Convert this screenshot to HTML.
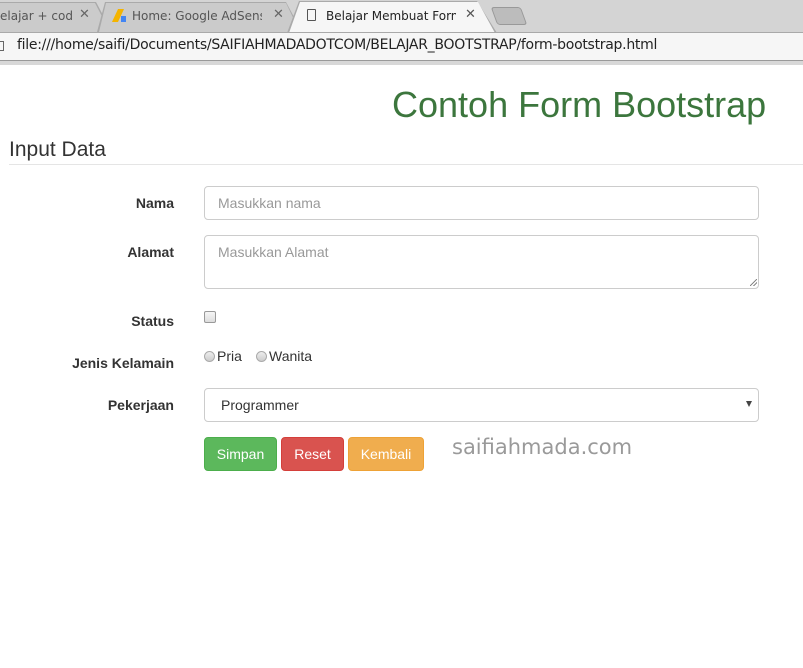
<!DOCTYPE html>
<html><head><meta charset="utf-8"><style>
*{box-sizing:border-box;margin:0;padding:0}
body{width:803px;height:668px;background:#fff;font-family:"Liberation Sans",sans-serif;position:relative;overflow:hidden;color:#333}
.a{position:absolute}
.tabbar{left:0;top:0;width:803px;height:32px;background:#d4d4d4}
.tab{top:2px;height:30px;font-family:"DejaVu Sans",sans-serif;font-size:12px;color:#444;line-height:28px;white-space:nowrap;overflow:hidden}
.addr{left:0;top:32px;width:803px;height:29px;background:#f6f6f6;border-top:1px solid #a9a9a9;border-bottom:1px solid #9a9a9a}
.lbl{font-weight:bold;font-size:14px;right:629px;text-align:right;color:#333}
.inp{left:204px;width:555px;border:1px solid #ccc;border-radius:4px;background:#fff;font-size:14px;color:#999;padding-left:13px}
.btn{top:437px;height:34px;border-radius:4px;color:#fff;font-size:14px;line-height:33px;text-align:center}
.radio{width:11px;height:11px;border:1px solid #aaa;border-radius:50%;background:linear-gradient(#eee,#ccc)}
.x{top:7px;font-size:13px;color:#666;font-family:"DejaVu Sans",sans-serif}
</style></head><body>
<div class="a tabbar"></div>
<!-- tab 1 -->
<div class="a" style="left:0;top:2px;width:112px;height:30px;background:#aaa;clip-path:polygon(0 0,96px 0,112px 30px,0 30px)"></div>
<div class="a" style="left:0;top:3px;width:110px;height:29px;background:#cbcbcb;clip-path:polygon(0 0,95px 0,110px 29px,0 29px)"></div>
<div class="a tab" style="left:0;width:73px;color:#555">elajar + codin</div>
<div class="a x" style="left:79px">✕</div>
<!-- tab 2 -->
<div class="a" style="left:97px;top:2px;width:205px;height:30px;background:#aaa;clip-path:polygon(8px 0,189px 0,205px 30px,0 30px)"></div>
<div class="a" style="left:99px;top:3px;width:201px;height:29px;background:#cbcbcb;clip-path:polygon(7px 0,187px 0,201px 29px,0 29px)"></div>
<div class="a" style="left:115px;top:9px;width:6px;height:13px;background:#f4b400;transform:skewX(-25deg)"></div>
<div class="a" style="left:121px;top:16px;width:5px;height:6px;background:#4285f4"></div>
<div class="a tab" style="left:132px;width:130px;color:#555">Home: Google AdSense</div>
<div class="a x" style="left:273px">✕</div>
<!-- tab 3 active -->
<div class="a" style="left:287px;top:1px;width:210px;height:32px;background:#aaa;clip-path:polygon(12px 0,190px 0,210px 32px,0 32px)"></div>
<div class="a" style="left:289px;top:2px;width:206px;height:31px;background:#f6f6f6;clip-path:polygon(11px 0,189px 0,206px 31px,0 31px)"></div>
<div class="a" style="left:307px;top:9px;width:9px;height:12px;border:1px solid #555;border-radius:1px"></div>
<div class="a tab" style="left:326px;width:130px;color:#222">Belajar Membuat Form</div>
<div class="a x" style="left:465px;color:#555">✕</div>
<div class="a" style="left:494px;top:7px;width:30px;height:18px;background:#bcbcbc;border:1px solid #999;border-radius:3px;transform:skewX(20deg)"></div>
<!-- address -->
<div class="a addr"></div>
<div class="a" style="left:-3px;top:41px;width:7px;height:10px;border:1px solid #666"></div>
<div class="a" style="left:17px;top:37px;font-family:'DejaVu Sans',sans-serif;font-size:14px;color:#222;letter-spacing:-0.28px">file:///home/saifi/Documents/SAIFIAHMADADOTCOM/BELAJAR_BOOTSTRAP/form-bootstrap.html</div>
<div class="a" style="left:0;top:61px;width:803px;height:4px;background:#d8d8d8"></div>

<div class="a" style="left:392px;top:84px;font-size:36px;color:#3c763d">Contoh Form Bootstrap</div>
<div class="a" style="left:9px;top:138px;font-size:21px;color:#333">Input Data</div>
<div class="a" style="left:9px;top:164px;width:794px;height:1px;background:#e5e5e5"></div>

<div class="a lbl" style="top:195px">Nama</div>
<div class="a inp" style="top:186px;height:34px;line-height:32px">Masukkan nama</div>
<div class="a lbl" style="top:244px">Alamat</div>
<div class="a inp" style="top:235px;height:54px;padding-top:8px">Masukkan Alamat</div>
<div class="a" style="left:750px;top:279px;width:7px;height:7px;background:linear-gradient(135deg,transparent 45%,#888 45%,#888 55%,transparent 55%,transparent 70%,#888 70%,#888 80%,transparent 80%)"></div>
<div class="a lbl" style="top:313px">Status</div>
<div class="a" style="left:204px;top:311px;width:12px;height:12px;border:1px solid #999;border-radius:2px;background:linear-gradient(#f5f5f5,#ddd)"></div>
<div class="a lbl" style="top:355px">Jenis Kelamain</div>
<div class="a radio" style="left:204px;top:351px"></div>
<div class="a" style="left:217px;top:348px;font-size:14px">Pria</div>
<div class="a radio" style="left:256px;top:351px"></div>
<div class="a" style="left:269px;top:348px;font-size:14px">Wanita</div>
<div class="a lbl" style="top:397px">Pekerjaan</div>
<div class="a inp" style="top:388px;height:34px;line-height:32px;color:#333;padding-left:16px">Programmer</div>
<div class="a" style="left:746px;top:401px;width:0;height:0;border-left:3px solid transparent;border-right:3px solid transparent;border-top:6px solid #444"></div>

<div class="a btn" style="left:204px;width:73px;background:#5cb85c;border:1px solid #4cae4c">Simpan</div>
<div class="a btn" style="left:281px;width:63px;background:#d9534f;border:1px solid #d43f3a">Reset</div>
<div class="a btn" style="left:348px;width:76px;background:#f0ad4e;border:1px solid #eea236">Kembali</div>
<div class="a" style="left:452px;top:435px;font-family:'DejaVu Sans',sans-serif;font-size:21px;color:#9a9a9a">saifiahmada.com</div>
</body></html>
